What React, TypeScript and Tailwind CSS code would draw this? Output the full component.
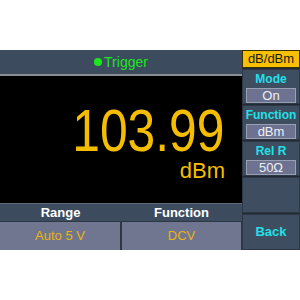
export default function App() {
  const side = [
    { label: "Mode", value: "On" },
    { label: "Function", value: "dBm" },
    { label: "Rel R", value: "50Ω" },
  ];
  return (
    <div
      className="w-[300px] h-[300px] bg-white pt-[50px]"
      style={{ fontFamily: '"Liberation Sans", Arial, sans-serif' }}
    >
      <div className="flex h-[200px]">
        <div className="flex w-[242px] flex-col">
          <div className="flex h-[24px] items-center justify-center gap-[2px] bg-[#3c4c5e] text-[14px] text-[#1ee61e]">
            <span className="h-[8px] w-[8px] rounded-full bg-[#1ee61e]" />
            <span>Trigger</span>
          </div>
          <div className="h-[2px] bg-[#8a8e92]" />
          <div className="flex flex-1 flex-col items-end bg-black pr-[17px] pt-[25px] text-[#f5bd00]">
            <div className="origin-right scale-x-[0.83] text-[60px] leading-[60px]">103.99</div>
            <div className="text-[22px] leading-[20px]">dBm</div>
          </div>
          <div className="flex h-[18px] items-center border-t border-[#5a6878] bg-[#3c4c5e] text-[13px] font-bold text-white">
            <div className="w-[121px] text-center">Range</div>
            <div className="flex-1 text-center">Function</div>
          </div>
          <div className="flex h-[29px] border-t border-[#2c3846] bg-[#2c3846] text-[13px] text-[#e8b410]">
            <div className="flex w-[120px] items-center justify-center bg-[#70768f]">Auto 5 V</div>
            <div className="ml-[2px] mr-[1px] flex flex-1 items-center justify-center bg-[#70768f]">DCV</div>
          </div>
        </div>
        <div className="flex flex-1 flex-col gap-[1px] bg-[#222b35]">
          <div className="flex h-[18px] items-center justify-center border border-[#3a3000] bg-[#f7c000] text-[13px] text-[#1a1a1a]">
            dB/dBm
          </div>
          {side.map((s) => (
            <div
              key={s.label}
              className="flex h-[35px] flex-col items-center border border-[#2c3846] bg-[#3e4e60] pt-[2px]"
            >
              <div className="text-[12px] font-bold leading-[14px] text-[#22e0e8]">{s.label}</div>
              <div className="mt-[2px] flex h-[15px] w-[50px] items-center justify-center border border-[#9aa0b4] bg-[#6c7290] text-[13px] text-[#eef0f4]">
                {s.value}
              </div>
            </div>
          ))}
          <div className="h-[36px] border border-[#2c3846] bg-[#3e4e60]" />
          <div className="flex flex-1 items-center justify-center border border-[#2c3846] bg-[#3e4e60] text-[13px] font-bold text-[#22e0e8]">
            Back
          </div>
        </div>
      </div>
    </div>
  );
}
